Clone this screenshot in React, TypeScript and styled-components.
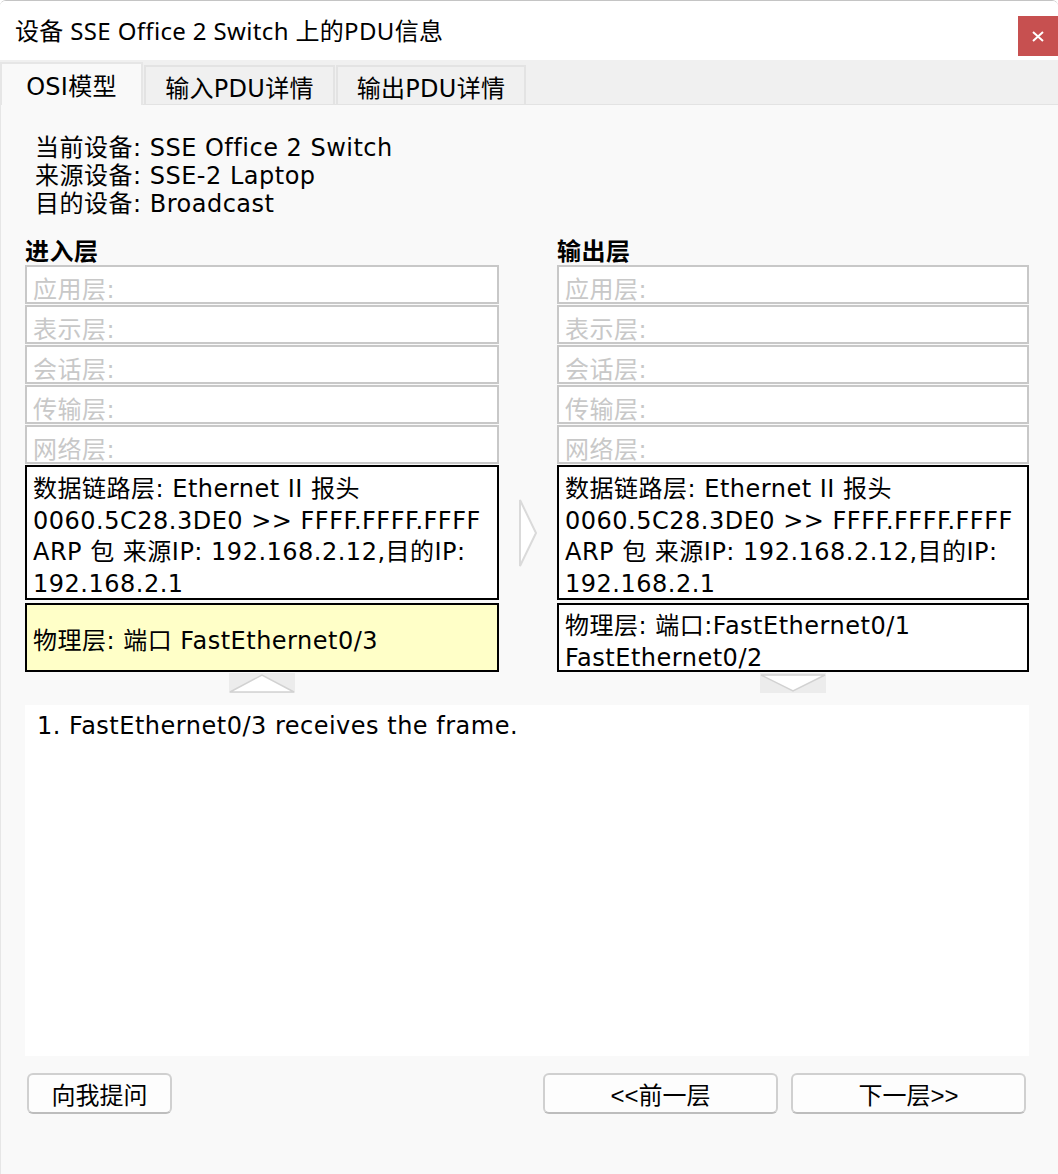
import React from "react";
import styled, { createGlobalStyle } from "styled-components";

const Global = createGlobalStyle`
  html, body { margin: 0; padding: 0; background: #ffffff; }
  * { box-sizing: border-box; }
`;

const BODY_FONT = `"DejaVu Sans", "Noto Sans CJK SC", sans-serif`;

const Window = styled.div`
  width: 1058px;
  height: 1174px;
  display: flex;
  flex-direction: column;
  overflow: hidden;
  border-top: 1px solid #c4c4c4;
  border-radius: 6px 6px 0 0;
  background: #f9f9f9;
  font-family: ${BODY_FONT};
  letter-spacing: 0.5px;
  color: #000;
`;

const TitleBar = styled.div`
  height: 59px;
  background: #ffffff;
  display: flex;
  align-items: flex-start;
  flex-shrink: 0;
`;

const Title = styled.div`
  margin: 16px 0 0 15px;
  font-family: "Noto Sans", "Noto Sans CJK SC", sans-serif;
  font-size: 24px;
  letter-spacing: 0.35px;
  line-height: 28px;
  white-space: nowrap;
`;

const CloseButton = styled.div`
  margin: 15px 0 0 auto;
  width: 40px;
  height: 40px;
  background: #c75050;
  display: flex;
  align-items: center;
  justify-content: center;
`;

const TabStrip = styled.div`
  height: 44px;
  background: #f0f0f0;
  display: flex;
  align-items: flex-end;
  flex-shrink: 0;
`;

const Tab = styled.div<{ $active?: boolean; $w: number }>`
  width: ${(p) => p.$w}px;
  height: ${(p) => (p.$active ? 43 : 39)}px;
  margin-right: 1px;
  margin-bottom: ${(p) => (p.$active ? -1 : 0)}px;
  position: relative;
  z-index: ${(p) => (p.$active ? 2 : 0)};
  background: ${(p) => (p.$active ? "#f9f9f9" : "#f0f0f0")};
  border: 2px solid ${(p) => (p.$active ? "#e6e6e6" : "#e3e3e3")};
  border-bottom: none;
  display: flex;
  align-items: center;
  justify-content: center;
  padding-top: ${(p) => (p.$active ? 0 : 2)}px;
  font-size: 24px;
  letter-spacing: 0.3px;
  white-space: nowrap;
`;

const Panel = styled.div`
  flex: 1;
  background: #f9f9f9;
  border-top: 1px solid #e3e3e3;
  border-left: 1px solid #e6e6e6;
  padding: 29px 29px 0 24px;
  display: flex;
  flex-direction: column;
`;

const Info = styled.div`
  margin-left: 10px;
  font-size: 24px;
  line-height: 28px;
  white-space: nowrap;
`;

const Columns = styled.div`
  margin-top: 21px;
  display: grid;
  grid-template-columns: 474px 58px 472px;
`;

const Column = styled.div`
  display: flex;
  flex-direction: column;
`;

const Heading = styled.div`
  font-size: 24px;
  font-weight: bold;
  line-height: 26px;
  height: 26px;
`;

const GrayLayer = styled.div`
  height: 39px;
  margin-bottom: 1px;
  background: #ffffff;
  border: 2px solid #c8c8c8;
  padding: 9px 0 0 6px;
  color: #c8c8c8;
  font-size: 24px;
  line-height: 28px;
  white-space: nowrap;
`;

const ActiveLayer = styled.div<{ $bg?: string; $h: number; $pad: number; $center?: boolean }>`
  height: ${(p) => p.$h}px;
  background: ${(p) => p.$bg || "#ffffff"};
  border: 2px solid #000000;
  padding: ${(p) => p.$pad}px 0 0 6px;
  display: flex;
  flex-direction: column;
  justify-content: ${(p) => (p.$center ? "center" : "flex-start")};
  font-size: 24px;
  line-height: 31.5px;
  white-space: nowrap;
`;

const PhysicalGap = styled.div`
  height: 3px;
`;

const Line = styled.div``;

const ArrowTab = styled.div`
  align-self: center;
  margin-top: 1px;
  width: 66px;
  height: 20px;
  background: #ececec;
  display: flex;
`;

const Middle = styled.div`
  padding: 260px 0 0 19px;
`;

const Description = styled.div`
  margin-top: 12px;
  height: 351px;
  background: #ffffff;
  padding: 7px 12px;
  font-size: 24px;
  line-height: 28px;
`;

const ButtonRow = styled.div`
  margin: 17px 3px 0 2px;
  display: flex;
  gap: 13px;
`;

const Button = styled.div<{ $w: number; $push?: boolean }>`
  width: ${(p) => p.$w}px;
  height: 41px;
  margin-left: ${(p) => (p.$push ? "auto" : "0")};
  background: #fdfdfd;
  border: 2px solid #d0d0d0;
  border-bottom-color: #bdbdbd;
  border-radius: 6px;
  display: flex;
  align-items: center;
  justify-content: center;
  font-family: "Liberation Sans", "Noto Sans CJK SC", sans-serif;
  font-size: 24px;
  letter-spacing: 0;
  white-space: nowrap;
`;

const grayLayers = ["应用层:", "表示层:", "会话层:", "传输层:", "网络层:"];
const dataLink = [
  "数据链路层: Ethernet II 报头",
  "0060.5C28.3DE0 >> FFFF.FFFF.FFFF",
  "ARP 包 来源IP: 192.168.2.12,目的IP:",
  "192.168.2.1",
];

const CloseIcon = () => (
  <svg width="12" height="11" viewBox="0 0 12 11">
    <path d="M1 1 L11 10 M11 1 L1 10" stroke="#fff" strokeWidth="2" />
  </svg>
);

const UpArrow = () => (
  <svg width="66" height="20" viewBox="0 0 66 20">
    <polygon points="1,19 33,2 65,19" fill="#ffffff" stroke="#d2d2d2" strokeWidth="1.5" />
  </svg>
);

const DownArrow = () => (
  <svg width="66" height="20" viewBox="0 0 66 20">
    <polygon points="1,2 33,18 65,2" fill="#ffffff" stroke="#d2d2d2" strokeWidth="1.5" />
  </svg>
);

const RightChevron = () => (
  <svg width="20" height="68" viewBox="0 0 20 68">
    <polygon points="2,1 18,34 2,67" fill="#ffffff" stroke="#dadada" strokeWidth="2" />
  </svg>
);

function LayerStack({
  title,
  physical,
  physicalBg,
  center,
  arrow,
}: {
  title: string;
  physical: string[];
  physicalBg?: string;
  center?: boolean;
  arrow: React.ReactNode;
}) {
  return (
    <Column>
      <Heading>{title}</Heading>
      {grayLayers.map((g) => (
        <GrayLayer key={g}>{g}</GrayLayer>
      ))}
      <ActiveLayer $h={135} $pad={7}>
        {dataLink.map((l) => (
          <Line key={l}>{l}</Line>
        ))}
      </ActiveLayer>
      <PhysicalGap />
      <ActiveLayer $h={69} $pad={center ? 9 : 6} $bg={physicalBg} $center={center}>
        {physical.map((l) => (
          <Line key={l}>{l}</Line>
        ))}
      </ActiveLayer>
      <ArrowTab>{arrow}</ArrowTab>
    </Column>
  );
}

export default function App() {
  return (
    <>
      <Global />
      <Window>
        <TitleBar>
          <Title>设备 SSE Office 2 Switch 上的PDU信息</Title>
          <CloseButton>
            <CloseIcon />
          </CloseButton>
        </TitleBar>
        <TabStrip>
          <Tab $active $w={143}>OSI模型</Tab>
          <Tab $w={191}>输入PDU详情</Tab>
          <Tab $w={190}>输出PDU详情</Tab>
        </TabStrip>
        <Panel>
          <Info>
            <div>当前设备: SSE Office 2 Switch</div>
            <div>来源设备: SSE-2 Laptop</div>
            <div>目的设备: Broadcast</div>
          </Info>
          <Columns>
            <LayerStack
              title="进入层"
              physical={["物理层: 端口 FastEthernet0/3"]}
              physicalBg="#ffffc8"
              center
              arrow={<UpArrow />}
            />
            <Middle>
              <RightChevron />
            </Middle>
            <LayerStack
              title="输出层"
              physical={["物理层: 端口:FastEthernet0/1", "FastEthernet0/2"]}
              arrow={<DownArrow />}
            />
          </Columns>
          <Description>1. FastEthernet0/3 receives the frame.</Description>
          <ButtonRow>
            <Button $w={145}>向我提问</Button>
            <Button $w={235} $push>
              &lt;&lt;前一层
            </Button>
            <Button $w={235}>下一层&gt;&gt;</Button>
          </ButtonRow>
        </Panel>
      </Window>
    </>
  );
}
